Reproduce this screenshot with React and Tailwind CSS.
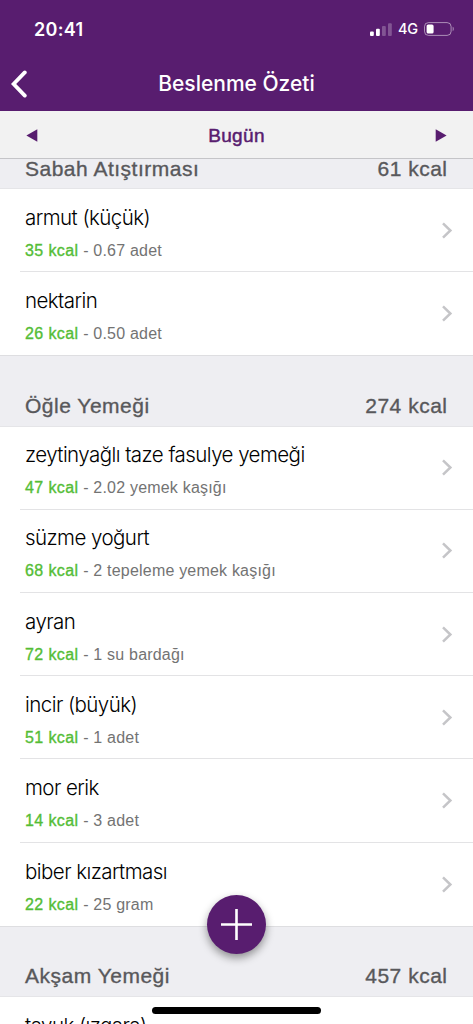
import React from 'react';

const meals = [
  {
    id: 1,
    title: 'Sabah Atıştırması',
    total: 61,
    foods: [
      { name: 'armut (küçük)', kcal: 35, amount: '0.67 adet' },
      { name: 'nektarin', kcal: 26, amount: '0.50 adet' },
    ],
  },
  {
    id: 2,
    title: 'Öğle Yemeği',
    total: 274,
    foods: [
      { name: 'zeytinyağlı taze fasulye yemeği', kcal: 47, amount: '2.02 yemek kaşığı' },
      { name: 'süzme yoğurt', kcal: 68, amount: '2 tepeleme yemek kaşığı' },
      { name: 'ayran', kcal: 72, amount: '1 su bardağı' },
      { name: 'incir (büyük)', kcal: 51, amount: '1 adet' },
      { name: 'mor erik', kcal: 14, amount: '3 adet' },
      { name: 'biber kızartması', kcal: 22, amount: '25 gram' },
    ],
  },
  {
    id: 3,
    title: 'Akşam Yemeği',
    total: 457,
    foods: [{ name: 'tavuk (ızgara)' }],
  },
];

const StatusBar = () => (
  <div className="flex h-[58px] items-center justify-between pl-[34px] pr-[18px]">
    <span className="font-['Inter'] text-[18px] font-semibold tracking-[0.3px]">20:41</span>
    <div className="flex items-center">
      <svg width="22" height="13" viewBox="0 0 22 13" fill="white">
        <rect x="0" y="8.5" width="3.8" height="4.5" rx="1" />
        <rect x="6" y="5.8" width="3.8" height="7.2" rx="1" />
        <rect x="12" y="3" width="3.8" height="10" rx="1" opacity="0.25" />
        <rect x="18" y="0.3" width="3.8" height="12.7" rx="1" opacity="0.25" />
      </svg>
      <span className="ml-[6px] w-[20px] font-['Inter'] text-[14.5px] font-medium tracking-[-0.2px]">4G</span>
      <svg className="ml-[6px]" width="31" height="14" viewBox="0 0 31 14" fill="none">
        <rect x="0.5" y="0.6" width="26.6" height="12.8" rx="4" stroke="white" strokeOpacity="0.5" />
        <rect x="2.6" y="2.4" width="7" height="9.2" rx="1.6" fill="white" />
        <path d="M28.7 4.8c1.4.5 1.4 3.9 0 4.4z" fill="white" fillOpacity="0.5" />
      </svg>
    </div>
  </div>
);

const NavBar = () => (
  <div className="grid h-[51px] grid-cols-[60px_1fr_60px] items-center">
    <button className="pl-[11px]">
      <svg width="17" height="28" viewBox="0 0 17 28" fill="none" stroke="white" strokeWidth="3.8" strokeLinecap="round">
        <path d="M13.8 2.4L2.6 14l11.2 11.6" />
      </svg>
    </button>
    <h1 className="whitespace-nowrap text-center font-['Inter'] text-[21px] font-medium leading-[26px]">
      Beslenme Özeti
    </h1>
  </div>
);

const DateBar = () => (
  <div className="flex h-[48px] shrink-0 items-center justify-between border-b border-[#c5c5c8] bg-[#f2f2f2] px-[26px] pt-px text-[#581d6f]">
    <svg width="12" height="13" viewBox="0 0 12 13" fill="currentColor">
      <path d="M11.3 0.3v12.4L0.4 6.5z" />
    </svg>
    <span className="pt-[2px] text-[19px] tracking-[0.35px] [-webkit-text-stroke:0.5px_currentColor]">Bugün</span>
    <svg width="12" height="13" viewBox="0 0 12 13" fill="currentColor">
      <path d="M0.7 0.3v12.4l10.9-6.2z" />
    </svg>
  </div>
);

const FoodRow = ({ food, last }) => (
  <div className="flex h-[83.2px] shrink-0 pl-[20px]">
    <div className={`flex flex-1 items-center justify-between pl-[5px] pr-[20px] ${last ? '' : 'border-b border-[#e3e3e5]'}`}>
      <div className="whitespace-nowrap pt-[4px]">
        <div className="font-['Inter'] text-[20.5px] font-light leading-[28px] tracking-[-0.55px] text-black">{food.name}</div>
        <div className="mt-[9px] h-[20px] text-[16px] leading-[20px] tracking-[0.2px] text-[#737373]">
          {food.kcal && (
            <>
              <span className="tracking-[0.4px] text-[#54bd36] [-webkit-text-stroke:0.35px_currentColor]">{food.kcal} kcal</span> - {food.amount}
            </>
          )}
        </div>
      </div>
      <svg width="12" height="17" viewBox="0 0 12 17" fill="none" stroke="#c5c5c8" strokeWidth="2.5">
        <path d="M2 1.3l7.4 7.2L2 15.7" />
      </svg>
    </div>
  </div>
);

const MealSection = ({ meal, clipped }) => (
  <section>
    <div
      className={`flex items-end justify-between whitespace-nowrap border-b border-[#e5e5e8] bg-[#eeeef2] pl-[25px] pr-[26px] text-[21px] tracking-[0.5px] text-[#58585b] [-webkit-text-stroke:0.35px_currentColor] ${
        clipped ? 'h-[30px] pb-[8px] leading-[22px]' : 'h-[71.3px] border-t border-t-[#dedee1] pb-[7px] leading-[26px]'
      }`}
    >
      <h2>{meal.title}</h2>
      <span className="mr-[-0.5px]">{meal.total} kcal</span>
    </div>
    {meal.foods.map((food, i) => (
      <FoodRow key={food.name} food={food} last={i === meal.foods.length - 1} />
    ))}
  </section>
);

const App = () => {
  return (
    <div className="relative flex h-[1024px] w-[473px] flex-col overflow-hidden bg-white font-['Liberation_Sans',sans-serif]">
      <header className="h-[111px] shrink-0 bg-[#581d6f] text-white">
        <StatusBar />
        <NavBar />
      </header>
      <DateBar />

      <main className="min-h-0 flex-1 overflow-hidden">
        {meals.map((meal, i) => (
          <MealSection key={meal.id} meal={meal} clipped={i === 0} />
        ))}
      </main>

      {/* Floating add button */}
      <button className="absolute left-[207px] top-[895px] flex h-[59px] w-[59px] items-center justify-center rounded-full bg-[#581d6f] shadow-[0_4px_8px_rgba(0,0,0,0.4)]">
        <svg width="31" height="31" viewBox="0 0 31 31" stroke="white" strokeWidth="2.6">
          <path d="M15.5 0v31M0 15.5h31" />
        </svg>
      </button>

      {/* Home indicator */}
      <div className="absolute left-[152px] top-[1007px] h-[7px] w-[169px] rounded-full bg-black" />
    </div>
  );
};

export default App;
